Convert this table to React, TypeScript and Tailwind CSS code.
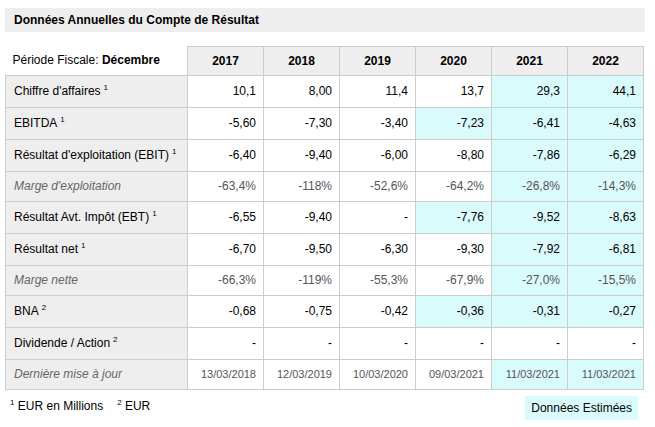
import React from "react";

type Row = {
  label: string;
  sup?: string;
  italic?: boolean;
  date?: boolean;
  values: string[];
  est: boolean[];
};

const rows: Row[] = [
  { label: "Chiffre d'affaires", sup: "1", values: ["10,1", "8,00", "11,4", "13,7", "29,3", "44,1"], est: [false, false, false, false, true, true] },
  { label: "EBITDA", sup: "1", values: ["-5,60", "-7,30", "-3,40", "-7,23", "-6,41", "-4,63"], est: [false, false, false, true, true, true] },
  { label: "Résultat d'exploitation (EBIT)", sup: "1", values: ["-6,40", "-9,40", "-6,00", "-8,80", "-7,86", "-6,29"], est: [false, false, false, false, true, true] },
  { label: "Marge d'exploitation", italic: true, values: ["-63,4%", "-118%", "-52,6%", "-64,2%", "-26,8%", "-14,3%"], est: [false, false, false, false, true, true] },
  { label: "Résultat Avt. Impôt (EBT)", sup: "1", values: ["-6,55", "-9,40", "-", "-7,76", "-9,52", "-8,63"], est: [false, false, false, true, true, true] },
  { label: "Résultat net", sup: "1", values: ["-6,70", "-9,50", "-6,30", "-9,30", "-7,92", "-6,81"], est: [false, false, false, false, true, true] },
  { label: "Marge nette", italic: true, values: ["-66,3%", "-119%", "-55,3%", "-67,9%", "-27,0%", "-15,5%"], est: [false, false, false, false, true, true] },
  { label: "BNA", sup: "2", values: ["-0,68", "-0,75", "-0,42", "-0,36", "-0,31", "-0,27"], est: [false, false, false, true, true, true] },
  { label: "Dividende / Action", sup: "2", values: ["-", "-", "-", "-", "-", "-"], est: [false, false, false, false, false, false] },
  { label: "Dernière mise à jour", italic: true, date: true, values: ["13/03/2018", "12/03/2019", "10/03/2020", "09/03/2021", "11/03/2021", "11/03/2021"], est: [false, false, false, false, true, true] },
];

const years = ["2017", "2018", "2019", "2020", "2021", "2022"];

export default function App() {
  return (
    <div
      className="w-[655px] h-[427px] bg-white text-black text-[12px] leading-[15px]"
      style={{ fontFamily: '"Liberation Sans", Arial, sans-serif' }}
    >
      <div className="pt-2 px-[5px]">
        <div className="h-6 w-[640px] bg-[#eeeeee] flex items-center pl-[9px] font-bold">
          Données Annuelles du Compte de Résultat
        </div>
      </div>
      <div className="pt-[14px] pl-[5px]">
        <table className="border-collapse table-fixed w-[639px]">
          <colgroup>
            <col className="w-[182px]" />
            {years.map((y) => (
              <col key={y} className="w-[76px]" />
            ))}
          </colgroup>
          <thead>
            <tr className="h-[29px]">
              <th className="text-left font-normal pl-[7px] p-0 border-b border-[#cccccc]">
                Période Fiscale: <span className="font-bold">Décembre</span>
              </th>
              {years.map((y) => (
                <th key={y} className="bg-[#eeeeee] border border-[#cccccc] font-bold text-center p-0">
                  {y}
                </th>
              ))}
            </tr>
          </thead>
          <tbody>
            {rows.map((r) => (
              <tr key={r.label} className={r.italic ? "h-[30px]" : "h-[32px]"}>
                <td
                  className={
                    "bg-[#eeeeee] border border-[#cccccc] pl-[8px] p-0 whitespace-nowrap " +
                    (r.italic ? "italic text-[#666666]" : "")
                  }
                >
                  {r.label}
                  {r.sup && (
                    <sup className="text-[8px] relative -top-[5px] ml-[3px]">{r.sup}</sup>
                  )}
                </td>
                {r.values.map((v, i) => (
                  <td
                    key={i}
                    className={
                      "border border-[#cccccc] text-right pr-[7px] p-0 whitespace-nowrap " +
                      (r.est[i] ? "bg-[#dafbfb] " : "bg-white ") +
                      (r.date ? "text-[11px] text-[#555555]" : r.italic ? "text-[#555555]" : "")
                    }
                  >
                    {v}
                  </td>
                ))}
              </tr>
            ))}
          </tbody>
        </table>
      </div>
      <div className="flex items-start justify-between pl-[10px] pr-[17px] pt-[6px]">
        <div className="pt-[3px]">
          <sup className="text-[8px] relative -top-[5px]">1</sup> EUR en Millions
          <span className="ml-[14px]">
            <sup className="text-[8px] relative -top-[5px]">2</sup> EUR
          </span>
        </div>
        <div className="bg-[#dafbfb] h-6 px-[6px] flex items-center">Données Estimées</div>
      </div>
    </div>
  );
}
